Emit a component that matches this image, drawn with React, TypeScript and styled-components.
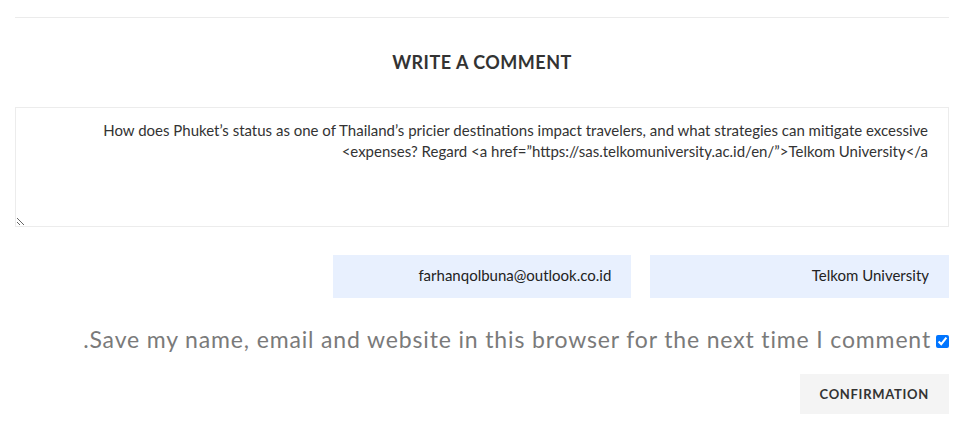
import React from "react";
import styled, { createGlobalStyle } from "styled-components";

const GlobalStyle = createGlobalStyle`
  html, body {
    margin: 0;
    padding: 0;
    background: #ffffff;
  }
  body {
    font-family: Lato, "Open Sans", sans-serif;
    color: #333;
  }
`;

const Page = styled.div`
  direction: rtl;
  padding: 17px 24px 0 15px;
`;

const Divider = styled.hr`
  margin: 0;
  border: 0;
  border-top: 1px solid #ebebeb;
`;

const Title = styled.h3`
  margin: 32px 0 0;
  text-align: center;
  font-family: Lato, sans-serif;
  font-size: 18px;
  line-height: 24px;
  font-weight: 700;
  color: #333;
  letter-spacing: 0.5px;
`;

const CommentBox = styled.textarea`
  display: block;
  box-sizing: border-box;
  width: 100%;
  height: 120px;
  margin-top: 33px;
  padding: 12px 20px;
  border: 1px solid #ececec;
  border-radius: 0;
  background: #fff;
  font-family: Lato, sans-serif;
  font-size: 15px;
  line-height: 21px;
  color: #333;
  outline: none;
`;

const FieldGrid = styled.div`
  display: grid;
  grid-template-columns: repeat(3, 1fr);
  column-gap: 19px;
  margin-top: 28px;
`;

const Field = styled.input`
  box-sizing: border-box;
  width: 100%;
  height: 43px;
  padding: 0 20px 4px;
  border: 0;
  border-radius: 0;
  background: #e8f0fe;
  font-family: Lato, sans-serif;
  font-size: 15px;
  color: #222;
  outline: none;
`;

const ConsentRow = styled.label`
  display: flex;
  align-items: center;
  gap: 5px;
  margin-top: 26px;
  height: 30px;
`;

const Check = styled.input`
  margin: 0;
  width: 13px;
  height: 13px;
  flex: none;
  position: relative;
  top: 2px;
`;

const ConsentText = styled.span`
  font-family: Lato, sans-serif;
  font-size: 23px;
  line-height: 30px;
  letter-spacing: 0.85px;
  color: #7a7a7a;
`;

const Actions = styled.div`
  display: flex;
  margin-top: 20px;
`;

const SubmitButton = styled.button`
  height: 40px;
  padding: 0 20px;
  border: 0;
  border-radius: 0;
  background: #f4f4f4;
  font-family: Lato, sans-serif;
  font-size: 13px;
  font-weight: 700;
  color: #333;
  letter-spacing: 0.7px;
  cursor: pointer;
`;

const comment =
  "How does Phuket’s status as one of Thailand’s pricier destinations impact travelers, and what strategies can mitigate excessive\nexpenses? Regard <a href=”https://sas.telkomuniversity.ac.id/en/”>Telkom University</a>";

export default function App() {
  return (
    <>
      <GlobalStyle />
      <Page dir="rtl">
        <Divider />
        <Title>WRITE A COMMENT</Title>
        <CommentBox defaultValue={comment} dir="rtl" />
        <FieldGrid>
          <Field type="url" defaultValue="Telkom University" dir="rtl" />
          <Field type="email" defaultValue="farhanqolbuna@outlook.co.id" dir="rtl" />
          <div />
        </FieldGrid>
        <ConsentRow>
          <Check type="checkbox" defaultChecked />
          <ConsentText>
            Save my name, email and website in this browser for the next time I comment.
          </ConsentText>
        </ConsentRow>
        <Actions>
          <SubmitButton type="submit">CONFIRMATION</SubmitButton>
        </Actions>
      </Page>
    </>
  );
}
